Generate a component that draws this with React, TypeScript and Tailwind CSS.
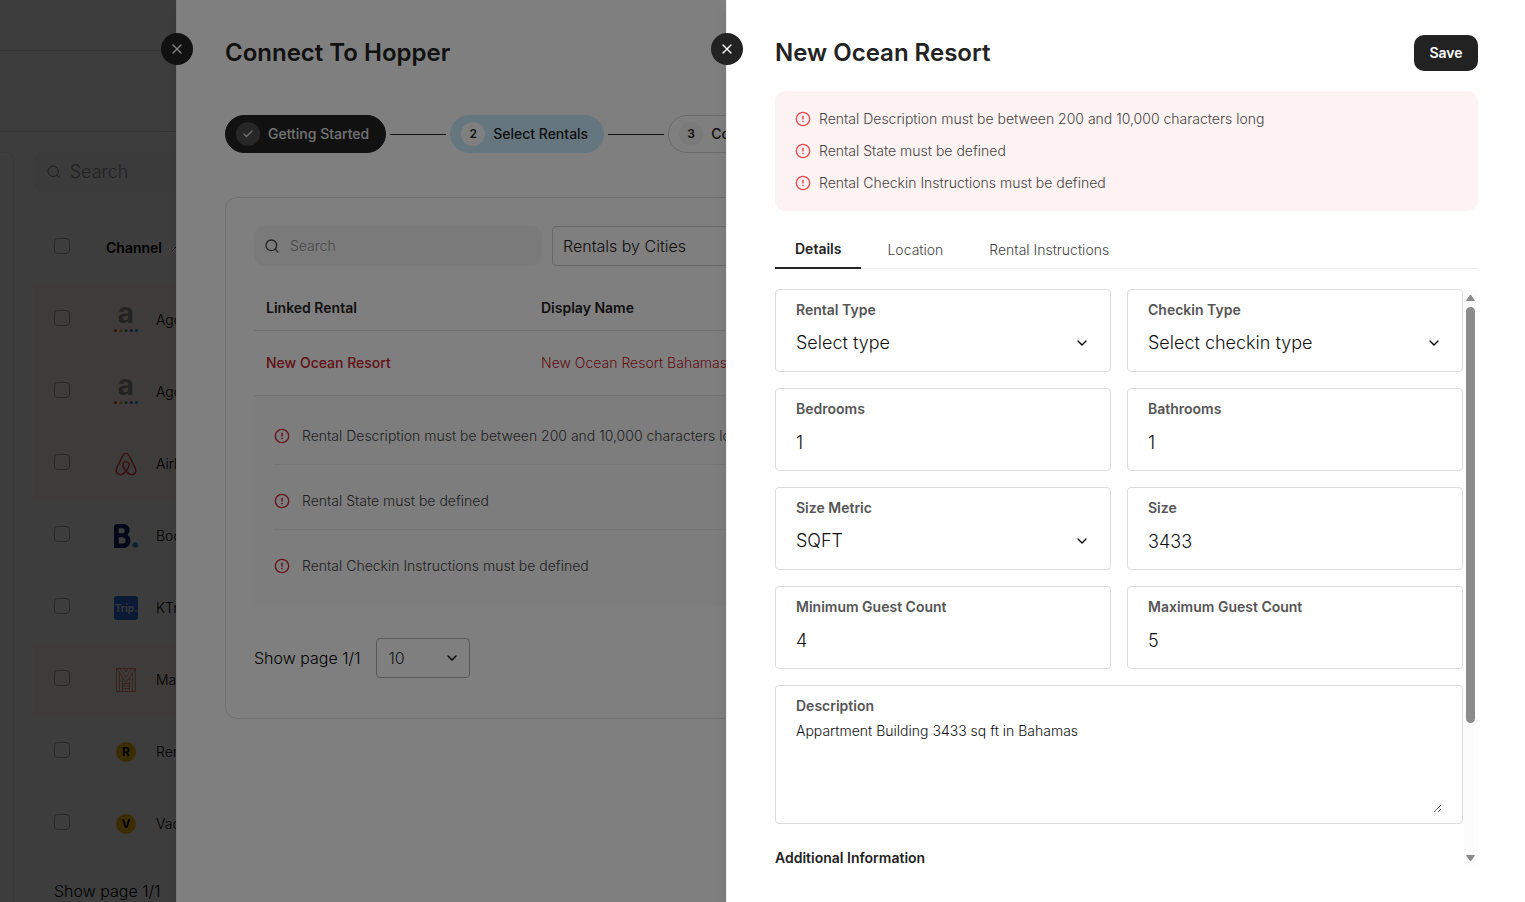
import { useState, type ReactNode } from 'react';
import { Check, ChevronDown, ChevronUp, Search, X } from 'lucide-react';
import { FaAirbnb } from 'react-icons/fa';

const validationErrors = [
  'Rental Description must be between 200 and 10,000 characters long',
  'Rental State must be defined',
  'Rental Checkin Instructions must be defined',
];

const tabs = ['Details', 'Location', 'Rental Instructions'];

function AgodaLogo() {
  return (
    <span className="flex flex-col items-center pt-1">
      <span className="-mt-4 text-[28px] leading-8 font-bold text-[#8c8c8c]">a</span>
      <svg viewBox="0 0 24 3" className="h-[3px] w-6">
        <circle cx="1.5" cy="1.5" r="1.5" fill="#e12d2d" />
        <circle cx="6.8" cy="1.5" r="1.5" fill="#e8a020" />
        <circle cx="12" cy="1.5" r="1.5" fill="#2fa35a" />
        <circle cx="17.2" cy="1.5" r="1.5" fill="#8a3fc0" />
        <circle cx="22.5" cy="1.5" r="1.5" fill="#2a86d8" />
      </svg>
    </span>
  );
}

function BookingLogo() {
  return (
    <svg viewBox="0 0 24 24" className="size-6">
      <path
        fill="#0c2260"
        fillRule="evenodd"
        d="M0 3.2C0 1.2 1.2 0 3.2 0H9c4 0 6.6 2.4 6.6 6.1 0 2.3-1 3.9-2.4 4.9 2 .9 3.3 2.9 3.3 5.4 0 4.2-2.9 7.6-7.3 7.6H0ZM4.8 4.3v5h3.3c1.700 0 2.600-1 2.600-2.600 0-1.500-.9-2.400-2.500-2.400ZM4.800 13.200v6.400h3.700c2 0 3-1.200 3-3.200 0-2.100-1.100-3.200-3-3.200Z"
      />
      <circle cx="21.2" cy="21" r="2.8" fill="#2d8fb9" />
    </svg>
  );
}

function MarriottLogo() {
  return (
    <svg viewBox="0 0 20 24" className="h-6 w-5" fill="none" stroke="#d9714f" strokeWidth=".8">
      <path d="M.5.5h19v23H.5Z" />
      <path d="M3.5 23.5V5.5M16.5 23.5V5.5" />
      <path d="M1 1l9 13.5L19 1M4.5 1 10 9.5 15.5 1M8 1l2 3 2-3" />
      <path d="M6.5 23.5V10M13.5 23.5V10M6.5 15.5h7M6.5 18h7M6.5 20.5h7" />
    </svg>
  );
}

function TripLogo() {
  return (
    <span className="flex size-6 items-center justify-center rounded-[3px] bg-[#2b68d8] text-[10px] font-bold text-[#ddd]">
      Trip<span className="text-[#f5b13d]">.</span>
    </span>
  );
}

function LetterLogo({ letter }: { letter: string }) {
  return (
    <span className="flex size-5 items-center justify-center rounded-full bg-[#f0b400] text-xs font-bold text-black">
      {letter}
    </span>
  );
}

interface Channel {
  id: number;
  name: string;
  logo: ReactNode;
  highlighted?: boolean;
}

const channels: Channel[] = [
  { id: 1, name: 'Agoda', logo: <AgodaLogo />, highlighted: true },
  { id: 2, name: 'Agoda Homes', logo: <AgodaLogo />, highlighted: true },
  { id: 3, name: 'Airbnb', logo: <FaAirbnb className="size-[26px] text-[#e8383d]" />, highlighted: true },
  { id: 4, name: 'Booking.com', logo: <BookingLogo /> },
  { id: 5, name: 'KTrip', logo: <TripLogo /> },
  { id: 6, name: 'Marriott', logo: <MarriottLogo />, highlighted: true },
  { id: 7, name: 'Rentals United', logo: <LetterLogo letter="R" /> },
  { id: 8, name: 'Vacasa', logo: <LetterLogo letter="V" /> },
];

function ErrorIcon({ className }: { className: string }) {
  return (
    <svg viewBox="0 0 16 16" className={`size-4 shrink-0 ${className}`} fill="none" stroke="currentColor">
      <circle cx="8" cy="8" r="6.7" strokeWidth="1.3" />
      <path d="M8 4.8v3.7M8 9.8v1.4" strokeWidth="1.5" />
    </svg>
  );
}

function Checkbox({ label }: { label: string }) {
  return (
    <input
      type="checkbox"
      aria-label={label}
      className="mb-1 size-4 shrink-0 appearance-none rounded border border-[#a0a0a0]"
    />
  );
}

function CloseButton() {
  return (
    <button
      type="button"
      aria-label="Close"
      className="absolute top-[33px] -left-4 flex size-8 items-center justify-center rounded-full bg-[#222] text-white"
    >
      <X className="size-4" strokeWidth={2} />
    </button>
  );
}

function ChannelsPage() {
  return (
    <div className="flex h-full flex-col bg-[#f7f7f7]">
      <div className="h-[51px] shrink-0 border-b border-[#d4d4d4]" />
      <div className="h-[81px] shrink-0 border-b border-[#d4d4d4]" />
      <div className="flex grow gap-5 pt-5">
        <aside className="w-[14px] shrink-0 rounded-tr-lg border-t border-r border-[#e4e4e4]" />
        <main className="grow">
          <div className="flex h-10 items-center gap-2 rounded-lg bg-[#efefef] px-3">
            <Search className="size-4 text-[#777]" strokeWidth={1.5} />
            <input
              type="text"
              aria-label="Search channels"
              placeholder="Search"
              className="w-full bg-transparent text-lg placeholder:text-[#8c8c8c]"
            />
          </div>
          <div className="mt-5 flex h-[72px] items-center px-5">
            <Checkbox label="Select all channels" />
            <span className="ml-9 text-sm font-semibold">Channel</span>
            <ChevronUp className="ml-[7px] size-4" strokeWidth={1.5} />
          </div>
          {channels.map((channel) => (
            <div
              key={channel.id}
              className={`flex h-[72px] items-center px-5 ${channel.highlighted ? 'bg-[#f7f2ec]' : ''}`}
            >
              <Checkbox label={channel.name} />
              <span className="ml-10 flex w-8 justify-center">{channel.logo}</span>
              <span className="ml-[14px] text-sm">{channel.name}</span>
            </div>
          ))}
          <p className="px-5 pt-[19px] text-base whitespace-nowrap">Show page 1/1</p>
        </main>
      </div>
    </div>
  );
}

function StepConnector() {
  return <span className="h-px w-14 shrink-0 bg-[#222]" />;
}

function Steps() {
  return (
    <ol className="mt-11 flex items-center gap-1 text-sm font-medium text-[#222]">
      <li className="flex h-[38px] shrink-0 items-center gap-2 rounded-full border border-[#222] bg-[#222] pr-4 pl-[10px] text-[#e4e4e4]">
        <span className="flex size-6 items-center justify-center rounded-full bg-[#4e4e4e]">
          <Check className="size-3" strokeWidth={2.5} />
        </span>
        Getting Started
      </li>
      <StepConnector />
      <li className="flex h-[38px] shrink-0 items-center gap-2 rounded-full border border-[#cbedff] bg-[#cbedff] pr-[15px] pl-[10px]">
        <span className="flex size-6 items-center justify-center rounded-full bg-white text-xs font-semibold">2</span>
        Select Rentals
      </li>
      <StepConnector />
      <li className="flex h-[38px] shrink-0 items-center gap-2 rounded-full border border-[#d6d6d6] pr-4 pl-[10px]">
        <span className="flex size-6 items-center justify-center rounded-full bg-[#f4f4f4] text-xs font-semibold">3</span>
        Confirm
      </li>
    </ol>
  );
}

function ConnectDrawer() {
  return (
    <section className="absolute inset-y-0 right-0 left-44 border-l border-[#eee] bg-white px-12 pt-[35px] shadow-lg">
      <CloseButton />
      <h2 className="text-2xl leading-9 font-semibold text-[#222]">Connect To Hopper</h2>
      <Steps />
      <div className="mt-11 rounded-xl border border-[#e2e2e2] px-7 pt-7 pb-10">
        <div className="flex gap-[10px]">
          <div className="flex h-10 w-72 items-center gap-[10px] rounded-[10px] bg-[#f5f5f5] px-[10px]">
            <Search className="size-4 shrink-0 text-[#444]" strokeWidth={2} />
            <input
              type="text"
              aria-label="Search rentals"
              placeholder="Search"
              className="w-full bg-transparent text-sm placeholder:text-[#939393]"
            />
          </div>
          <select
            aria-label="Rentals filter"
            className="h-10 w-72 appearance-none rounded border border-[#d0d0d0] px-[10px] text-base text-[#222]"
          >
            <option>Rentals by Cities</option>
          </select>
        </div>
        <table className="mt-5 w-full table-fixed text-left text-sm">
          <thead>
            <tr className="h-11 border-b border-[#e6e6e6]">
              <th className="w-[275px] px-3 font-semibold text-[#222]">Linked Rental</th>
              <th className="px-3 font-semibold text-[#222]">Display Name</th>
            </tr>
          </thead>
          <tbody>
            <tr className="h-[65px] border-b border-[#e6e6e6] text-[#c4202b]">
              <td className="px-3 font-medium">New Ocean Resort</td>
              <td className="px-3">New Ocean Resort Bahamas</td>
            </tr>
            <tr className="bg-[#fafafa]">
              <td colSpan={2} className="px-5 pt-1 pb-[11px]">
                <ul className="divide-y divide-[#ebebeb] text-[#444]">
                  {validationErrors.map((error) => (
                    <li key={error} className="flex h-[65px] items-center gap-3 pt-2">
                      <ErrorIcon className="text-[#cc2430]" />
                      {error}
                    </li>
                  ))}
                </ul>
              </td>
            </tr>
          </tbody>
        </table>
        <div className="mt-8 flex items-center gap-4">
          <label htmlFor="page-size" className="text-base">
            Show page 1/1
          </label>
          <div className="relative">
            <select
              id="page-size"
              className="h-10 w-[94px] appearance-none rounded border border-[#b0b0b0] px-[11px] text-base text-[#333]"
            >
              <option>10</option>
            </select>
            <ChevronDown className="pointer-events-none absolute top-3 right-[10px] size-4" />
          </div>
        </div>
      </div>
    </section>
  );
}

interface FieldProps {
  id: string;
  label: string;
  value: string;
  type?: 'text' | 'select';
}

function Field({ id, label, value, type = 'text' }: FieldProps) {
  return (
    <div className="rounded border border-[#dcdcdc] px-5 pt-[10px] pb-3">
      <label htmlFor={id} className="block text-sm font-semibold text-[#555]">
        {label}
      </label>
      {type === 'select' ? (
        <div className="relative mt-[7px]">
          <select id={id} className="h-8 w-full appearance-none text-lg text-[#111]">
            <option>{value}</option>
          </select>
          <ChevronDown className="pointer-events-none absolute top-2 right-0 size-4" />
        </div>
      ) : (
        <input id={id} type="text" defaultValue={value} className="mt-[7px] block h-8 w-full text-lg text-[#111]" />
      )}
    </div>
  );
}

// Decorative track, always visible beside the form
function ScrollTrack() {
  return (
    <div className="flex w-[15px] shrink-0 flex-col items-center bg-[#fcfcfc] pt-[5px] pb-[3px]">
      <svg viewBox="0 0 9 7" className="h-[7px] w-[9px]" fill="#8b8b8b" stroke="#8b8b8b" strokeLinejoin="round">
        <path d="M4.5 1 8.5 6.5h-8Z" />
      </svg>
      <div className="mt-[6px] h-[416px] w-[9px] rounded-full bg-[#8b8b8b]" />
      <svg viewBox="0 0 9 7" className="mt-auto h-[7px] w-[9px]" fill="#8b8b8b" stroke="#8b8b8b" strokeLinejoin="round">
        <path d="M.5.5h8L4.5 6Z" />
      </svg>
    </div>
  );
}

function RentalDrawer() {
  const [activeTab, setActiveTab] = useState('Details');

  return (
    <section className="absolute inset-y-0 right-0 flex w-[799px] flex-col border-l border-[#eee] bg-white pt-[35px] pr-[47px] pb-[37px] pl-12 shadow-lg">
      <CloseButton />
      <header className="flex items-center justify-between">
        <h2 className="text-2xl leading-9 font-semibold text-[#222]">New Ocean Resort</h2>
        <button type="button" className="h-9 w-16 rounded-[10px] bg-[#222] text-sm font-semibold text-white">
          Save
        </button>
      </header>
      <ul className="mt-5 rounded-[10px] bg-[#fff2f2] px-5 py-3 text-sm text-[#444]">
        {validationErrors.map((error) => (
          <li key={error} className="flex h-8 items-center gap-2">
            <ErrorIcon className="text-[#f04848]" />
            {error}
          </li>
        ))}
      </ul>
      <nav className="mt-5 flex gap-[6px] border-b border-[#ebebeb] text-sm">
        {tabs.map((tab) => (
          <button
            key={tab}
            type="button"
            onClick={() => setActiveTab(tab)}
            className={`-mb-px h-[38px] px-5 ${
              tab === activeTab ? 'border-b-2 border-[#222] font-semibold text-[#222]' : 'text-[#444]'
            }`}
          >
            {tab}
          </button>
        ))}
      </nav>
      <div className="mt-5 flex min-h-0 grow">
        <form className="grid grow grid-cols-2 content-start gap-4 overflow-hidden">
          <Field id="rental-type" label="Rental Type" value="Select type" type="select" />
          <Field id="checkin-type" label="Checkin Type" value="Select checkin type" type="select" />
          <Field id="bedrooms" label="Bedrooms" value="1" />
          <Field id="bathrooms" label="Bathrooms" value="1" />
          <Field id="size-metric" label="Size Metric" value="SQFT" type="select" />
          <Field id="size" label="Size" value="3433" />
          <Field id="min-guests" label="Minimum Guest Count" value="4" />
          <Field id="max-guests" label="Maximum Guest Count" value="5" />
          <div className="col-span-2 rounded border border-[#dcdcdc] px-5 py-[10px]">
            <label htmlFor="description" className="block text-sm font-semibold text-[#555]">
              Description
            </label>
            <textarea
              id="description"
              defaultValue="Appartment Building 3433 sq ft in Bahamas"
              className="mt-[5px] block h-[92px] w-full text-sm text-[#111]"
            />
          </div>
          <h3 className="col-span-2 mt-2 text-sm font-semibold text-[#222]">Additional Information</h3>
        </form>
        <ScrollTrack />
      </div>
    </section>
  );
}

export default function App() {
  return (
    <div className="relative h-screen overflow-hidden font-['Inter',sans-serif] font-light">
      <ChannelsPage />
      <div className="absolute inset-0 bg-black/50" />
      <ConnectDrawer />
      <div className="absolute inset-0 bg-black/50" />
      <RentalDrawer />
    </div>
  );
}
